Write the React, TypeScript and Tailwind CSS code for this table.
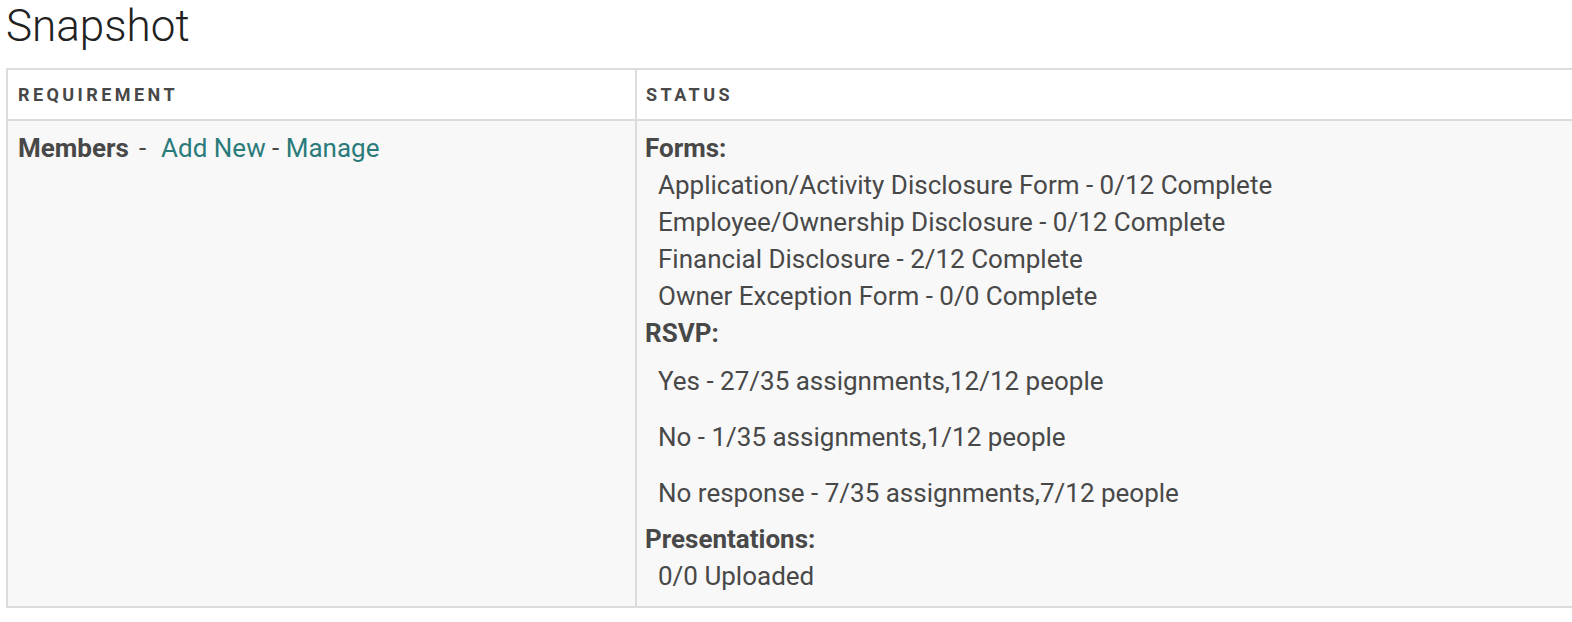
import React from "react";

const forms = [
  "Application/Activity Disclosure Form - 0/12 Complete",
  "Employee/Ownership Disclosure - 0/12 Complete",
  "Financial Disclosure - 2/12 Complete",
  "Owner Exception Form - 0/0 Complete",
];

const rsvp = [
  "Yes - 27/35 assignments,12/12 people",
  "No - 1/35 assignments,1/12 people",
  "No response - 7/35 assignments,7/12 people",
];

export default function App() {
  return (
    <div className="min-h-screen overflow-hidden bg-white font-['Roboto',sans-serif] text-[#484848]">
      {/* HEADER */}
      <h1 className="pl-[6px] pt-[2px] text-[44px] font-light leading-[48px] text-[#222]">
        Snapshot
      </h1>

      {/* TABLE */}
      <div className="ml-[6px] mt-[18px] w-[1600px] border-2 border-[#dcdcdc]">
        <div className="grid grid-cols-[629px_1fr] border-b-2 border-[#dcdcdc] bg-white">
          <div className="h-[49px] border-r-2 border-[#dcdcdc] pl-[10px] text-[18px] font-bold leading-[49px] tracking-[0.19em] text-[#484848]">
            REQUIREMENT
          </div>
          <div className="h-[49px] pl-[9px] text-[18px] font-bold leading-[49px] tracking-[0.19em] text-[#484848]">
            STATUS
          </div>
        </div>

        <div className="grid grid-cols-[629px_1fr] bg-[#f8f8f8] text-[26px] leading-[37px]">
          <div className="border-r-2 border-[#dcdcdc] pl-[10px] pt-[9px]">
            <span className="font-bold">Members</span>
            <span className="ml-[10px] mr-[15px]">-</span>
            <a className="text-[#2b7b7b]">Add New</a>
            <span> - </span>
            <a className="text-[#2b7b7b]">Manage</a>
          </div>

          <div className="pl-[8px] pt-[9px] pb-[11px]">
            <div className="font-bold">Forms:</div>
            {forms.map((f) => (
              <div key={f} className="pl-[13px]">
                {f}
              </div>
            ))}

            <div className="font-bold">RSVP:</div>
            <div className="mt-[11px] flex flex-col gap-[19px]">
              {rsvp.map((r) => (
                <div key={r} className="pl-[13px]">
                  {r}
                </div>
              ))}
            </div>

            <div className="mt-[9px] font-bold">Presentations:</div>
            <div className="pl-[13px]">0/0 Uploaded</div>
          </div>
        </div>
      </div>
    </div>
  );
}
